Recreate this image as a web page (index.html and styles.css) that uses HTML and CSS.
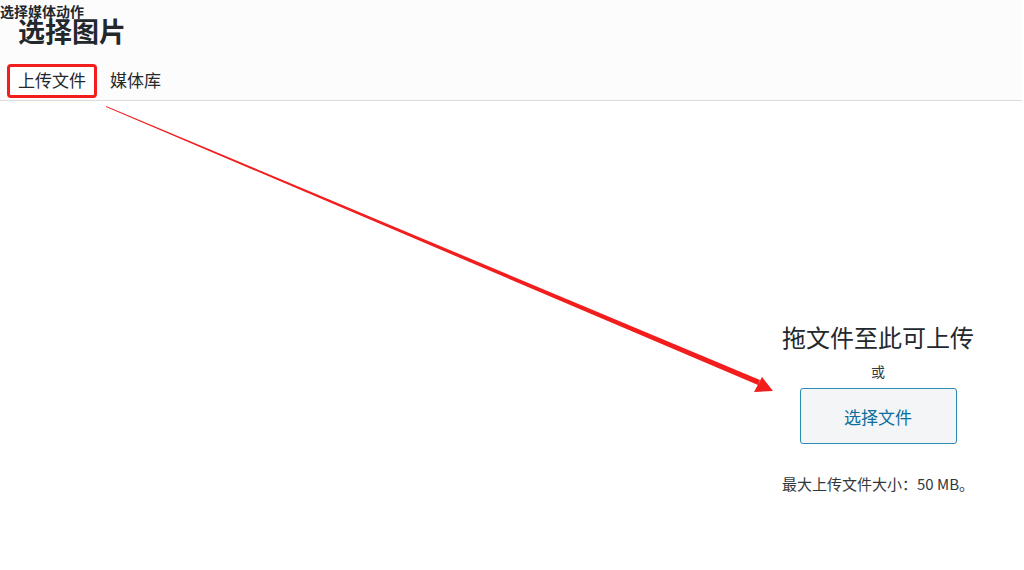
FILE: index.html
```html
<!DOCTYPE html>
<html lang="zh-CN">
  <head>
    <meta charset="utf-8" />
    <title>选择图片</title>
    <link rel="stylesheet" href="styles.css">
  </head>
  <body>
    <div class="frame">
      <h2 class="sr-title">选择媒体动作</h2>
      <div class="header">
        <h1 class="title">选择图片</h1>
        <div class="tabs">
          <a class="tab active">上传文件</a>
          <a class="tab">媒体库</a>
        </div>
      </div>
      <div class="content">
        <div class="uploader">
          <p class="drop-text">拖文件至此可上传</p>
          <p class="or">或</p>
          <button class="select-btn">选择文件</button>
          <p class="max-size">最大上传文件大小：50 MB。</p>
        </div>
      </div>
      <svg class="annotation" width="1024" height="570" viewBox="0 0 1024 570">
        <polygon points="106,106 760,380 758,385 106,107" fill="#f21d1d" />
        <polygon points="773,391 754,392 762,377" fill="#f21d1d" />
      </svg>
      <div class="highlight"></div>
    </div>
  </body>
</html>
```

FILE: styles.css
```css
html,
body {
  margin: 0;
  padding: 0;
  height: 100%;
}

body {
  background: #fff;
  color: #32373c;
  font-family: "Noto Sans CJK SC", "Liberation Sans", sans-serif;
  overflow: hidden;
}

.frame {
  position: relative;
  width: 1024px;
  height: 570px;
}

.sr-title {
  position: absolute;
  top: 0;
  left: 0;
  margin: 0;
  font-size: 14px;
  line-height: 22px;
  font-weight: 700;
  color: #23282d;
  z-index: 2;
}

.header {
  background: #fcfcfc;
  border-bottom: 1px solid #dcdcde;
  margin-right: 2px;
  height: 101px;
  box-sizing: border-box;
  display: flex;
  flex-direction: column;
}

.title {
  margin: 0;
  padding: 13px 0 0 18px;
  font-size: 27px;
  line-height: 36px;
  font-weight: 700;
  color: #23282d;
}

.tabs {
  display: flex;
  margin-top: 16px;
  padding-left: 10px;
  gap: 8px;
}

.tab {
  font-size: 17px;
  line-height: 30px;
  padding: 0 8px;
  color: #23282d;
}

.tab.active {
  background: #fff;
}

.content {
  display: flex;
  padding-top: 216px;
  padding-left: 778px;
}

.uploader {
  width: 200px;
  display: flex;
  flex-direction: column;
  align-items: center;
}

.drop-text {
  margin: 0;
  font-size: 24px;
  line-height: 40px;
  white-space: nowrap;
  color: #23282d;
}

.or {
  margin: 4px 0 7px;
  font-size: 14px;
  line-height: 20px;
}

.select-btn {
  width: 157px;
  height: 56px;
  border: 1px solid #2b8cb3;
  border-radius: 3px;
  background: #f3f5f6;
  color: #0a6ea0;
  font-family: inherit;
  font-size: 17px;
}

.max-size {
  margin: 30px 0 0;
  font-size: 15px;
  line-height: 20px;
  white-space: nowrap;
  color: #32373c;
}

.annotation {
  position: absolute;
  top: 0;
  left: 0;
  pointer-events: none;
}

.highlight {
  position: absolute;
  left: 7px;
  top: 64px;
  width: 84px;
  height: 28px;
  border: 3px solid #f21d1d;
  border-radius: 4px;
}
```
